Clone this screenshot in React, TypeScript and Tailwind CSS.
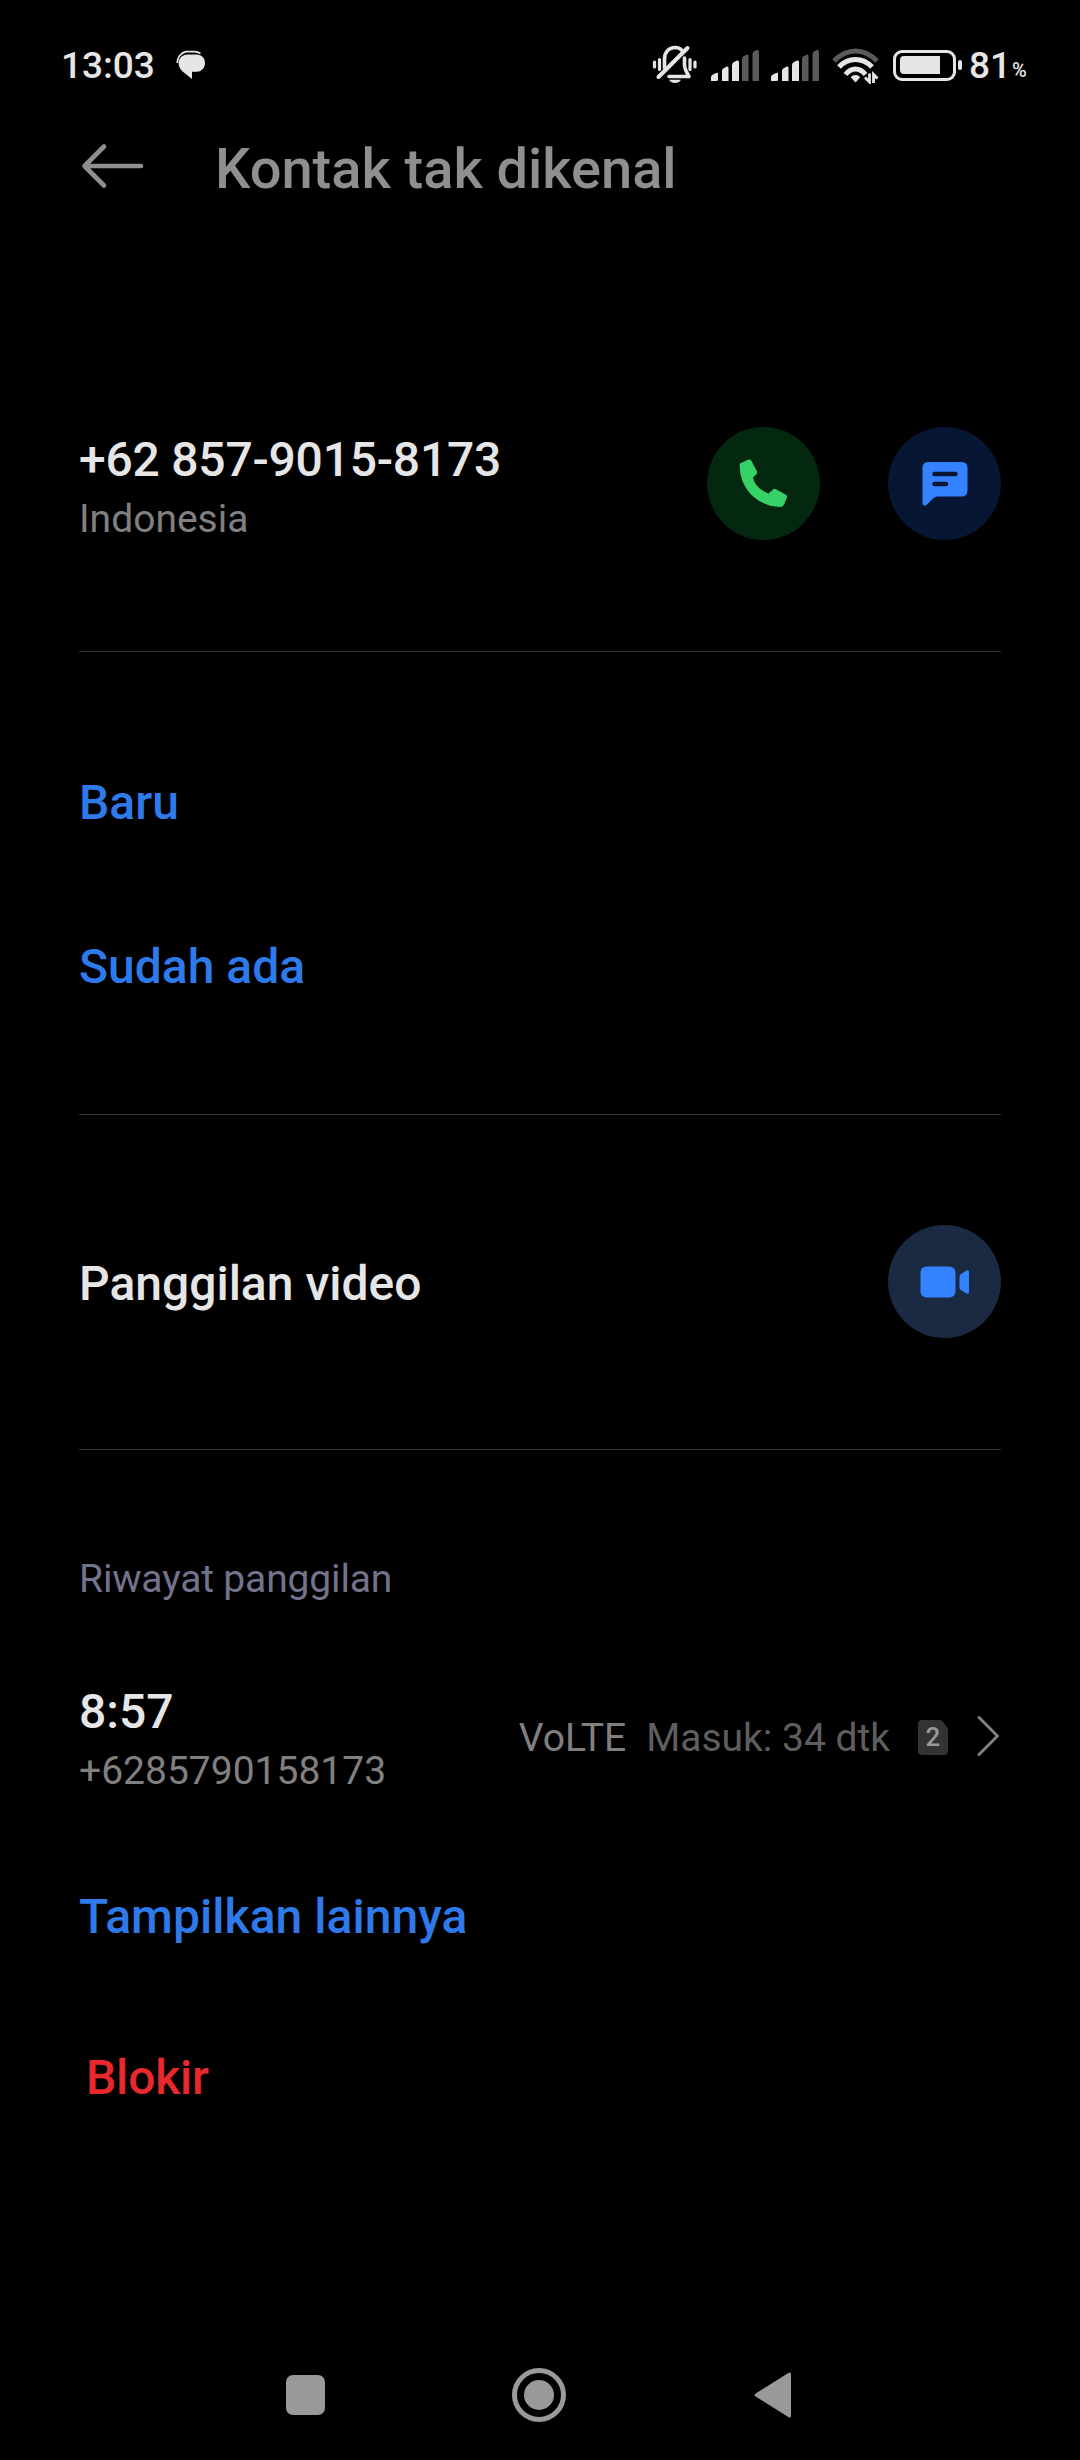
import React from "react";

function Divider() {
  return <div className="h-px bg-[#343434]" />;
}

function Signal() {
  return (
    <svg width="49" height="32" viewBox="0 0 49 32">
      <path d="M0 32V28Q0 26 3 25L5 24Q7 23.200 7 25V30.500Q7 32 5.500 32Z" fill="#e6e6e6" />
      <path d="M11 32V21.500Q11 20 13 19L16 17.500Q17.500 17 17.500 19V32Z" fill="#e6e6e6" />
      <path d="M21 32V16Q21 14 23 13L26 11.500Q28 11 28 13V32Z" fill="#e6e6e6" />
      <path d="M31 32V10Q31 8 33 7L36 5.500Q37.500 5 37.500 7V32Z" fill="#5a5a5a" />
      <path d="M41.500 32V5Q41.500 3 43.500 2L46 1Q48 0.500 48 3V32Z" fill="#5a5a5a" />
    </svg>
  );
}

function StatusBar() {
  return (
    <header className="flex h-[130px] items-center pl-[61px] text-[#e6e6e6]">
      <span className="mt-[2px] w-[115px] text-[37px] leading-[44px] font-medium whitespace-nowrap">13:03</span>
      <svg className="-mt-px" width="30" height="30" viewBox="0 0 30 30" fill="#e6e6e6">
        <path d="M2.500 12.500A9 8.500 0 0 1 11.500 4.500H20.500C25.500 4.500 29 8 29 13S25.500 21.800 20.500 21.800H16V29L6 21Q2.500 17 2.500 12.500Z" />
        <path d="M1.200 13A11.500 11.500 0 0 1 10 1.600H18Q22 1.800 24.500 3.500" fill="none" stroke="#e6e6e6" strokeWidth="1.600" />
      </svg>
      <div className="ml-[446px] flex items-center">
        <svg width="46" height="40" viewBox="0 0 46 40" fill="none" stroke="#e6e6e6" strokeWidth="3.600" strokeLinecap="round">
          <path d="M2.500 17V22M7.500 14.500V24.500M43 17V22M38 14.500V24.500" strokeWidth="3.200" />
          <path d="M12.500 23V14C12.500 7 17 2.500 23 2.500C26 2.500 28.500 3.500 30 5.500" />
          <path d="M32.500 13V20Q32.500 24 37 31.500H17" strokeLinejoin="round" />
          <path d="M6.500 32L35.500 3" strokeWidth="4" />
          <path d="M17 34.800H29Q27 38 23 38T17 34.800Z" fill="#e6e6e6" stroke="none" />
        </svg>
        <div className="ml-[13px] flex gap-[11px]">
          <Signal />
          <Signal />
        </div>
        <svg className="mt-px ml-[12px]" width="47" height="36" viewBox="0 0 47 36" fill="none" stroke="#e6e6e6" strokeWidth="5">
          <path d="M2 13Q12 3 23.500 3T45 13" stroke="#5a5a5a" />
          <path d="M7 19Q14 11.500 23.500 11.500T40 19" />
          <path d="M13.500 26.500Q18 21 23.500 21T33.500 26.500" />
          <path d="M19 29.500Q19.500 27 23.500 27T28 29.500L23.500 34.500Z" fill="#e6e6e6" stroke="none" />
          <path d="M37.500 25.500V34L33 29.500M41.500 35V26.500L45.500 30.500" strokeWidth="2.800" />
        </svg>
        <div className="ml-[14px] flex h-[31px] w-[63px] rounded-[9px] border-[3px] border-[#e6e6e6] p-[3.500px]">
          <div className="w-[40px] rounded-l-[4px] bg-[#e6e6e6]" />
        </div>
        <div className="ml-[2px] h-[10px] w-[4px] rounded-[2px] bg-[#e6e6e6]" />
        <span className="mt-[2px] ml-[7px] text-[37px] leading-[44px] font-medium">81</span>
        <span className="mt-[10px] ml-px text-[20px] leading-[24px] font-medium">%</span>
      </div>
    </header>
  );
}

function RoundButton({ className, label, children }: { className: string; label: string; children: React.ReactNode }) {
  return (
    <button aria-label={label} className={"flex size-[113px] items-center justify-center rounded-full " + className}>
      {children}
    </button>
  );
}

export default function App() {
  return (
    <div className="flex h-[2460px] w-[1080px] flex-col bg-black font-[Roboto,sans-serif]">
      <StatusBar />
      <div className="flex h-[76px] items-start pl-[81px]">
        <svg className="mt-[13px]" width="64" height="46" viewBox="0 0 64 46" fill="none" stroke="#8f8f8f" strokeWidth="4.600" strokeLinecap="round" strokeLinejoin="round">
          <path d="M60 23H3.500M23 3.500L3.500 23L23 42.500" />
        </svg>
        <h1 className="mt-px ml-[70px] text-[56px] leading-[76px] font-medium text-[#8f8f8f]">Kontak tak dikenal</h1>
      </div>

      <main className="mx-[79px] flex flex-col">
        <section className="flex h-[445px] items-start pt-[221px]">
          <div className="flex-1">
            <div className="mt-[2px] text-[48px] leading-[62px] font-medium tracking-[-0.22px] text-[#e6e6e6]">+62 857-9015-8173</div>
            <div className="mt-[2px] text-[39px] leading-[52px] text-[#808080]">Indonesia</div>
          </div>
          <div className="flex gap-[68px]">
            <RoundButton label="Telepon" className="bg-[#04270f]">
              <svg width="49" height="49" viewBox="0 0 49 49" fill="#36d167">
                <path d="M1 4.500L9 0.800Q11.500 0 12.500 2L18 12.500Q18.500 14 17.500 15L14 18.500Q16 29 29.500 34.500L34 30.500Q35 29.500 36.500 30L46.500 35.500Q48.500 36.500 48 38.500L45 45.500Q44 48 41 48C18 47 1.500 30 0.800 8Q0.500 5.500 1 4.500Z" />
              </svg>
            </RoundButton>
            <RoundButton label="Pesan" className="bg-[#061633]">
              <svg width="46" height="44" viewBox="0 0 46 44">
                <path d="M6.500 0H39.500Q45.500 0 45.500 6V28.500Q45.500 34.500 39.500 34.500H15Q13 34.500 11.500 36L5 42.500Q3.500 44 2 43.500T0.500 41V6Q0.500 0 6.500 0Z" fill="#3482ff" />
                <path d="M12.500 12H33.500M12.500 22H24" stroke="#061633" strokeWidth="4.500" strokeLinecap="round" />
              </svg>
            </RoundButton>
          </div>
        </section>
        <Divider />
        <section className="flex h-[462px] flex-col pt-[119px] text-[48px] leading-[64px] font-medium text-[#2f7aea]">
          <div>Baru</div>
          <div className="mt-[100px]">Sudah ada</div>
        </section>
        <Divider />
        <section className="flex h-[334px] items-start justify-between pt-[110px]">
          <div className="mt-[27px] text-[48px] leading-[64px] font-medium text-[#e6e6e6]">Panggilan video</div>
          <RoundButton label="Panggilan video" className="bg-[#1a2a42]">
            <svg width="50" height="32" viewBox="0 0 50 32" fill="#3482ff">
              <rect x="0.500" y="0.500" width="35" height="31" rx="6" />
              <path d="M39.500 10.500Q39.500 9 41 8L46.500 4.500Q49 3.500 49 6V26Q49 28.500 46.500 27.500L41 24Q39.500 23 39.500 21.500Z" />
            </svg>
          </RoundButton>
        </section>
        <Divider />
        <h2 className="mt-[103px] text-[39px] leading-[52px] tracking-[-0.15px] text-[#73738c]">Riwayat panggilan</h2>
        <div className="mt-[75px] flex h-[116px] items-center text-[39px] leading-[52px]">
          <div className="flex-1 self-start">
            <div className="mt-px text-[48px] leading-[62px] font-medium text-[#e6e6e6]">8:57</div>
            <div className="mt-[2px] text-[#808080]">+6285790158173</div>
          </div>
          <span className="text-[#808080]">VoLTE</span>
          <span className="ml-[20px] text-[#5e5e5e]">Masuk: 34 dtk</span>
          <span className="relative mb-px ml-[28px] flex h-[35px] w-[30px] items-center justify-center">
            <svg className="absolute inset-0" width="30" height="35" viewBox="0 0 30 35" fill="#333333">
              <path d="M4 0H21Q23 0 24 1L29 7Q30 8 30 10V31Q30 35 26 35H4Q0 35 0 31V4Q0 0 4 0Z" />
            </svg>
            <span className="relative text-[26px] leading-[35px] font-medium text-[#999999]">2</span>
          </span>
          <svg className="mb-[4px] ml-[29px]" width="24" height="42" viewBox="0 0 24 42" fill="none" stroke="#808080" strokeWidth="3" strokeLinecap="round" strokeLinejoin="round">
            <path d="M2 2.500L20.500 21L2 39.500" />
          </svg>
        </div>
        <div className="mt-[89px] text-[48px] leading-[64px] font-medium tracking-[0.05px] text-[#2f7aea]">Tampilkan lainnya</div>
        <div className="mt-[97px] ml-[7px] text-[48px] leading-[64px] font-medium tracking-[-0.2px] text-[#e8282c]">Blokir</div>
      </main>

      <nav className="mt-auto flex h-[130px] items-center pl-[286px]">
        <div className="h-[40px] w-[39px] rounded-[7px] bg-[#999999]" />
        <div className="ml-[187px] flex size-[54px] items-center justify-center rounded-full border-[5px] border-[#999999]">
          <div className="size-[30px] rounded-full bg-[#999999]" />
        </div>
        <svg className="ml-[188px]" width="38" height="46" viewBox="0 0 38 46" fill="#999999" stroke="#999999" strokeWidth="3" strokeLinejoin="round">
          <path d="M2 23L35.500 2V44Z" />
        </svg>
      </nav>
    </div>
  );
}
